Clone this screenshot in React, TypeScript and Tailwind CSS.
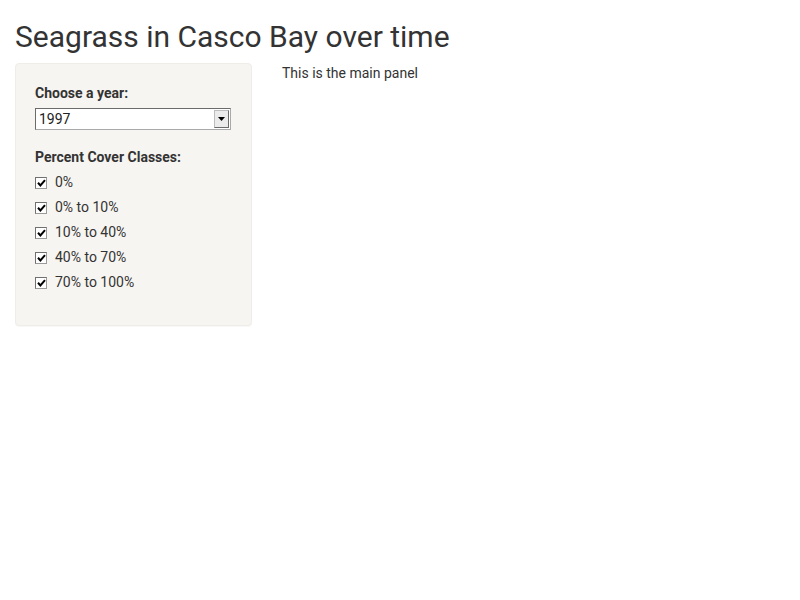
const classes = ['0%', '0% to 10%', '10% to 40%', '40% to 70%', '70% to 100%'];

function CheckBox() {
  return (
    <span className="w-[12px] h-[12px] border border-[#9a9a9a] border-t-[#707070] border-l-[#707070] bg-white flex items-center justify-center shrink-0">
      <svg width="9" height="8" viewBox="0 0 9 8">
        <path d="M1 3.8 L3.4 6.4 L8 1.2" fill="none" stroke="#000" strokeWidth="2" />
      </svg>
    </span>
  );
}

export default function App() {
  return (
    <div className="w-[800px] h-[600px] bg-white text-[#333] px-[15px]" style={{ fontFamily: 'Roboto, "Liberation Sans", sans-serif' }}>
      <h2 className="text-[30px] leading-[33px] pt-[20px] mb-[10px] font-normal">Seagrass in Casco Bay over time</h2>
      <div className="flex">
        <div className="w-[237px] shrink-0">
          <div className="bg-[#f7f5f1] border border-[#f0ede8] rounded-[4px] p-[19px] shadow-[0_1px_1px_rgba(0,0,0,0.03)]">
            <div className="text-[14px] leading-[20px] font-bold mb-[5px]">Choose a year:</div>
            <div className="h-[22px] w-[196px] mt-[1px] flex bg-white border border-[#a9a9a9] border-t-[#6b6b6b] border-l-[#6b6b6b]">
              <span className="flex-1 text-[14px] leading-[20px] pl-[3px] text-[#222]">1997</span>
              <span className="w-[15px] my-[1px] mr-[1px] bg-[#ebebeb] border border-[#bdbdbd] border-r-[#6b6b6b] border-b-[#6b6b6b] flex items-center justify-center">
                <svg width="7" height="4" viewBox="0 0 7 4"><path d="M0 0 H7 L3.5 4 Z" fill="#000" /></svg>
              </span>
            </div>
            <div className="text-[14px] leading-[20px] font-bold mt-[17px] mb-[3px]">Percent Cover Classes:</div>
            <div className="flex flex-col">
              {classes.map((c) => (
                <div key={c} className="flex items-center gap-[8px] h-[25px] text-[14px]">
                  <CheckBox />
                  <span>{c}</span>
                </div>
              ))}
            </div>
            <div className="h-[11px]" />
          </div>
        </div>
        <div className="pl-[30px] text-[14px] leading-[20px]">This is the main panel</div>
      </div>
    </div>
  );
}
